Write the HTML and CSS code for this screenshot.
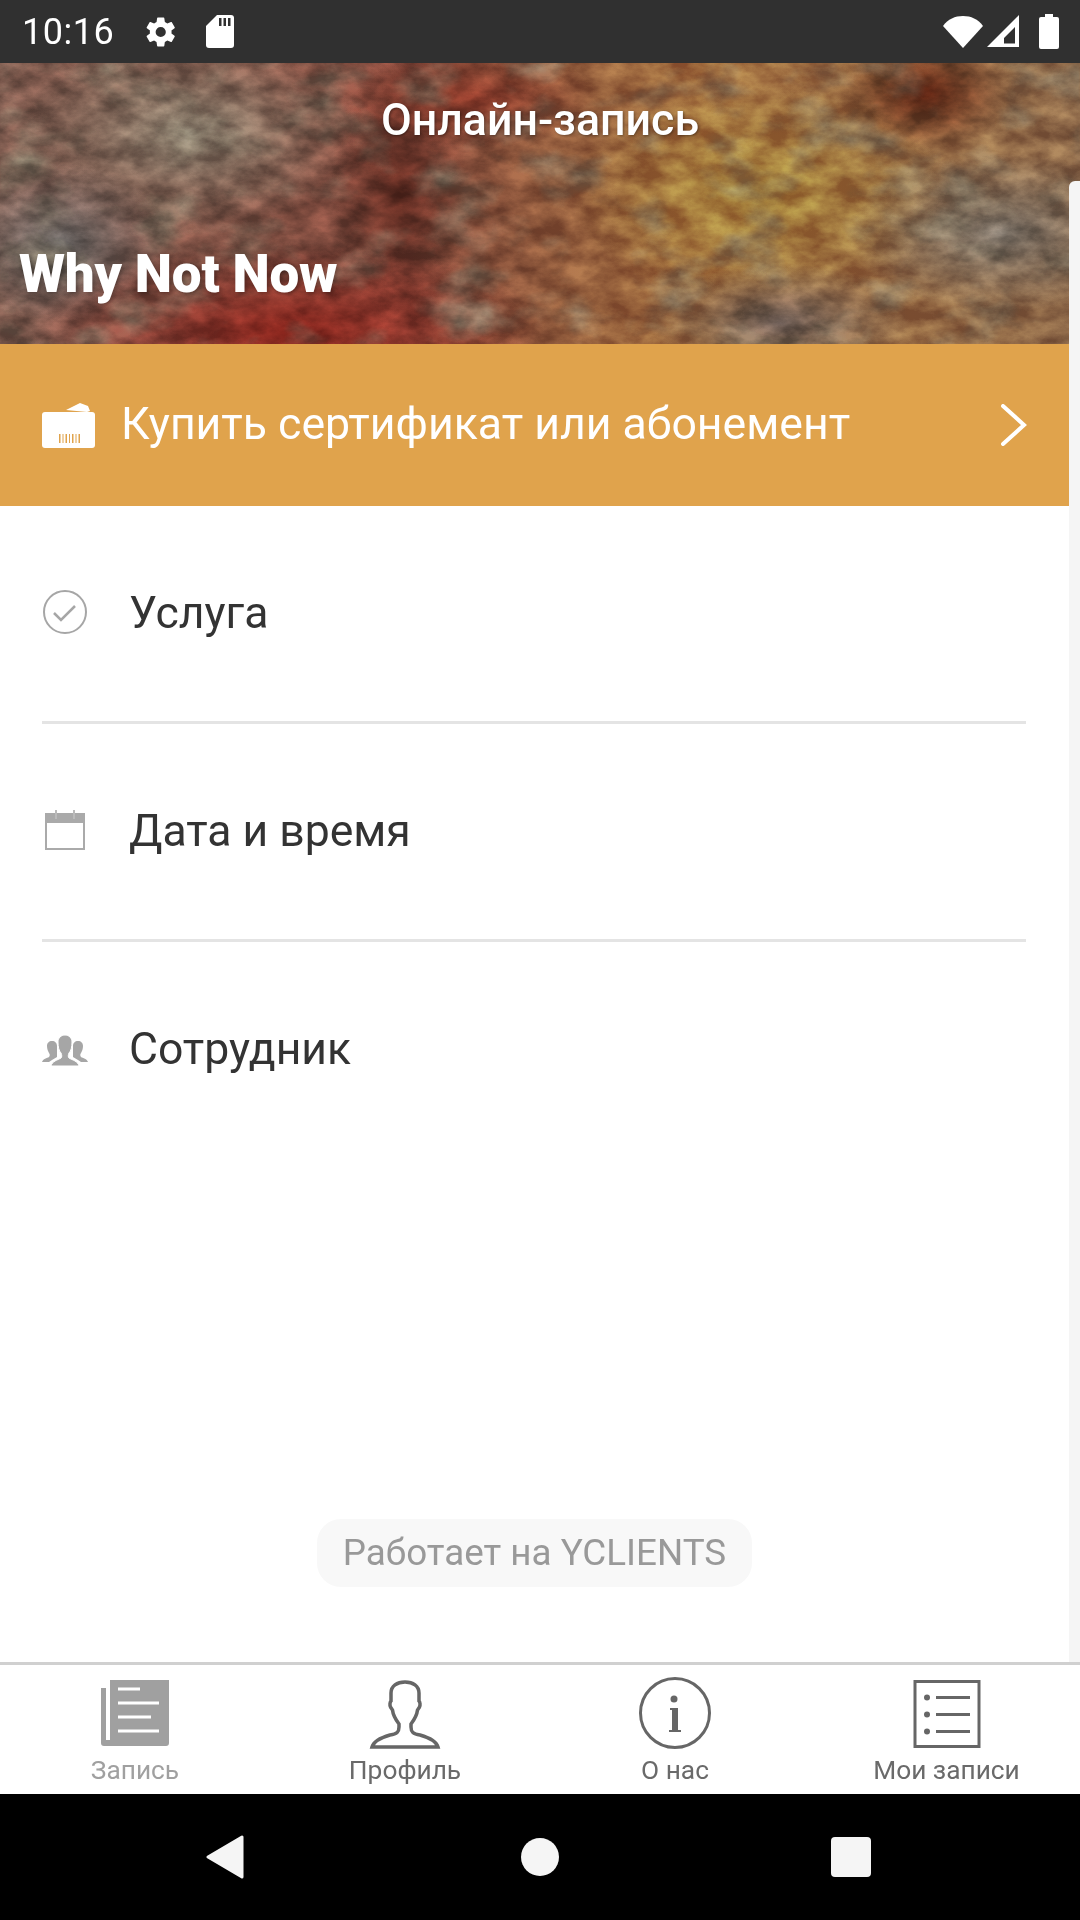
FILE: index.html
```html
<!DOCTYPE html>
<html lang="ru">
<head>
    <meta charset="UTF-8">
    <title>Онлайн-запись</title>
    <link rel="stylesheet" href="styles.css">
</head>
<body>
    <div class="app">
        <div class="status-bar">
            <span class="clock">10:16</span>
            <svg class="st-gear" width="34" height="34" viewBox="0 0 24 24" fill="#fff"><path d="M19.4 13c.04-.32.06-.66.06-1s-.02-.68-.07-1l2.16-1.68c.2-.15.25-.42.13-.64l-2.05-3.54c-.12-.22-.39-.3-.62-.22l-2.55 1.02c-.53-.4-1.1-.74-1.73-1l-.39-2.7A.5.5 0 0 0 13.85 1.8h-4.1a.5.5 0 0 0-.5.43l-.38 2.7c-.62.26-1.2.6-1.73 1L4.59 4.9c-.23-.09-.5 0-.62.22L1.92 8.66c-.13.22-.07.49.12.64L4.2 11c-.05.32-.08.67-.08 1s.02.68.07 1l-2.16 1.68c-.2.15-.25.42-.13.64l2.05 3.54c.12.22.39.3.62.22l2.55-1.02c.53.4 1.1.74 1.73 1l.39 2.7c.04.25.25.43.5.43h4.1c.25 0 .47-.18.5-.43l.38-2.7c.62-.26 1.2-.6 1.73-1l2.55 1.02c.23.09.5 0 .62-.22l2.05-3.54c.12-.22.07-.49-.13-.64zM11.8 15.6a3.6 3.6 0 1 1 0-7.2 3.6 3.6 0 0 1 0 7.2z"/></svg>
            <svg class="st-sd" width="28" height="33" viewBox="0 0 28 33"><path d="M11 0h14a3 3 0 0 1 3 3v27a3 3 0 0 1-3 3H3a3 3 0 0 1-3-3V11z" fill="#fff"/><path d="M13 3h2.5v8H13zM17.5 3H20v8h-2.500zM22 3h2.500v8H22z" fill="#303030"/></svg>
            <span class="st-space"></span>
            <svg width="40" height="33" viewBox="0 0 40 33" fill="#fff"><path d="M0 11C5 4 12 1 20 1s15 3 20 10L20 33z"/></svg>
            <svg class="st-signal" width="33" height="33" viewBox="0 0 33 33"><path d="M0 32 32 0v32zM17 28.500h11V12L17 23z" fill="#fff" fill-rule="evenodd"/></svg>
            <svg class="st-battery" width="20" height="35" viewBox="0 0 20 35" fill="#fff"><path d="M6 0h8v3h4a2 2 0 0 1 2 2v28a2 2 0 0 1-2 2H2a2 2 0 0 1-2-2V5a2 2 0 0 1 2-2h4z"/></svg>
        </div>

        <div class="header">
            <svg class="paint" width="1080" height="281">
                <defs>
                    <filter id="mottle" x="0" y="0" width="100%" height="100%" color-interpolation-filters="sRGB">
                        <feTurbulence type="fractalNoise" baseFrequency="0.03 0.05" numOctaves="6" seed="7"/>
                        <feColorMatrix type="matrix" values="1.8 0 0 0 -0.45  1.8 0 0 0 -0.45  1.8 0 0 0 -0.45  0 0 0 0 1"/>
                        <feGaussianBlur stdDeviation="0.7"/>
                    </filter>
                    <filter id="haze" x="0" y="0" width="100%" height="100%" color-interpolation-filters="sRGB">
                        <feTurbulence type="fractalNoise" baseFrequency="0.014 0.022" numOctaves="4" seed="4"/>
                        <feColorMatrix type="matrix" values="0 0 0 0 0.5  0 0 0 0 0.47  0 0 0 0 0.4  0 2 0 0 -1"/>
                        <feGaussianBlur stdDeviation="1"/>
                    </filter>
                </defs>
                <rect width="1080" height="281" filter="url(#haze)"/>
                <rect class="mottle" width="1080" height="281" filter="url(#mottle)"/>
            </svg>
            <div class="title">Онлайн-запись</div>
            <div class="company">Why Not Now</div>
        </div>

        <div class="buy">
            <svg width="53" height="45" viewBox="0 0 53 45">
                <path d="M24 7 38 0l8 3 2 5-3 1z" fill="#fff"/>
                <rect y="9" width="53" height="36" rx="3" fill="#fff"/>
                <path d="M17 31h1.500v9H17zM20.500 31h1v9h-1zM23.500 31h1.500v9h-1.500zM27 31h1v9h-1zM30 31h1.500v9H30zM33.500 31h1v9h-1zM36.500 31h1.500v9h-1.500z" fill="#e0a34c"/>
            </svg>
            <span class="buy-text">Купить сертификат или абонемент</span>
            <svg class="chevron" width="26" height="42" viewBox="0 0 26 42"><path d="M2 2l21 19L2 40" fill="none" stroke="#fff" stroke-width="4" stroke-linecap="round"/></svg>
        </div>

        <div class="rows">
            <div class="row line">
                <svg class="row-icon" width="46" height="46" viewBox="0 0 46 46"><circle cx="23" cy="23" r="21" fill="none" stroke="#a6a6a6" stroke-width="2"/><path d="M12 24l7 7 14-14" fill="none" stroke="#a6a6a6" stroke-width="2.500"/></svg>
                <span>Услуга</span>
            </div>
            <div class="row line">
                <svg class="row-icon" width="46" height="46" viewBox="0 0 46 46"><rect x="4" y="7" width="38" height="35" fill="none" stroke="#aaa" stroke-width="2"/><rect x="4" y="7" width="38" height="9" fill="#aaa"/><path d="M14 3v9M32 3v9" stroke="#bbb" stroke-width="2"/></svg>
                <span>Дата и время</span>
            </div>
            <div class="row">
                <svg class="row-icon" width="46" height="46" viewBox="0 0 46 46" fill="#a6a6a6">
                    <path d="M0 37c1-3 5-4 7-5 1-1 1-3 0-4-1-2-2-4-2-7 0-3 2-5 5-5s5 2 5 5v11l-5 3-3 2z"/>
                    <path d="M46 37c-1-3-5-4-7-5-1-1-1-3 0-4 1-2 2-4 2-7 0-3-2-5-5-5s-5 2-5 5v11l5 3 3 2z"/>
                    <path d="M9 41c1-5 7-6 10-8 1-1 1-3 0-5-2-2-3-6-3-11 0-4 3-7 7-7s7 3 7 7c0 5-1 9-3 11-1 2-1 4 0 5 3 2 9 3 10 8z" stroke="#fff" stroke-width="1"/>
                </svg>
                <span>Сотрудник</span>
            </div>
        </div>

        <div class="powered"><span class="powered-pill">Работает на YCLIENTS</span></div>

        <div class="tabs">
            <div class="tab active">
                <svg width="70" height="70" viewBox="0 2 70 70" fill="#a0a0a0">
                    <path d="M10 2h59v63a3 3 0 0 1-3 3H4a3 3 0 0 1-3-3V10h5v52h4z"/>
                    <path d="M18 11h22M18 25h41M18 39h33M18 53h41" stroke="#fff" stroke-width="3"/>
                </svg>
                <span>Запись</span>
            </div>
            <div class="tab">
                <svg width="72" height="70" viewBox="0 0 72 70"><path d="M3 67C5 60 14 57 21 55 28 54 30 52 30 47V44C27 40 24 35 23.500 30L21.500 27C20.500 25 21 22 22 21V13C22 6 28 2 36 2S50 6 50 13V21C51 22 51.500 25 50.500 27L48.500 30C48 35 45 40 42 44V47C42 52 44 54 51 55 58 57 67 60 69 67Z" fill="none" stroke="#666" stroke-width="3.500"/></svg>
                <span>Профиль</span>
            </div>
            <div class="tab">
                <svg class="info-icon" width="72" height="72" viewBox="0 0 72 72">
                    <circle cx="36" cy="36" r="34.500" fill="none" stroke="#666" stroke-width="3"/>
                    <circle cx="35" cy="22" r="3.500" fill="#666"/>
                    <path d="M31 31h8v22h3v2H30v-2h3V33h-2z" fill="#666"/>
                </svg>
                <span>О нас</span>
            </div>
            <div class="tab list-tab">
                <svg width="68" height="70" viewBox="0 1.500 68 70">
                    <rect x="2" y="3" width="64" height="65" fill="none" stroke="#666" stroke-width="3"/>
                    <circle cx="14" cy="19" r="3" fill="#666"/><circle cx="14" cy="36" r="3" fill="#666"/><circle cx="14" cy="53" r="3" fill="#666"/>
                    <path d="M23 19h34M23 36h34M23 53h34" stroke="#666" stroke-width="3"/>
                </svg>
                <span>Мои записи</span>
            </div>
        </div>

        <div class="nav-bar">
            <svg width="40" height="44" viewBox="0 0 40 44"><path d="M3 22 37 2v40z" fill="#f5f5f5" stroke="#f5f5f5" stroke-width="3" stroke-linejoin="round"/></svg>
            <span class="nav-circle"></span>
            <span class="nav-square"></span>
        </div>

        <div class="rail"></div>
    </div>
</body>
</html>
```

FILE: styles.css
```css
* {
    box-sizing: border-box;
}
body {
    margin: 0;
    font-family: Roboto, "Liberation Sans", sans-serif;
    background-color: white;
}
.app {
    position: relative;
    display: flex;
    flex-direction: column;
    width: 1080px;
    height: 1920px;
    overflow: hidden;
}
.status-bar {
    display: flex;
    align-items: center;
    height: 63px;
    padding: 0 21px 0 22px;
    background-color: #303030;
    color: white;
}
.clock {
    font-size: 36px;
    font-weight: 400;
    letter-spacing: 0.5px;
    width: 122px;
}
.st-sd {
    margin-left: 28px;
}
.st-space {
    flex: 1;
}
.st-signal {
    margin-left: 4px;
}
.st-battery {
    margin-left: 19px;
}
.header {
    position: relative;
    display: flex;
    flex-direction: column;
    height: 281px;
    padding: 29px 19px 0;
    color: white;
    background-color: #84594a;
    background-image:
        radial-gradient(ellipse 90px 60px at 925px 30px, #5f2413 0%, rgba(95,36,19,0) 100%),
        radial-gradient(ellipse 130px 50px at 470px 35px, #8c3a2a 0%, rgba(140,58,42,0) 100%),
        radial-gradient(ellipse 260px 90px at 290px 270px, #93281f 0%, rgba(147,40,31,0) 100%),
        radial-gradient(ellipse 70px 130px at 400px 130px, #5e2a20 0%, rgba(94,42,32,0) 100%),
        radial-gradient(ellipse 110px 80px at 60px 180px, #6e6a68 0%, rgba(110,106,104,0) 100%),
        radial-gradient(ellipse 170px 100px at 190px 70px, #8a7f6e 0%, rgba(138,127,110,0) 100%),
        radial-gradient(ellipse 150px 80px at 1000px 170px, #7b7268 0%, rgba(123,114,104,0) 100%),
        radial-gradient(ellipse 130px 60px at 780px 260px, #6f5f58 0%, rgba(111,95,88,0) 100%),
        radial-gradient(ellipse 190px 110px at 760px 130px, #a8843c 0%, rgba(168,132,60,0) 100%),
        linear-gradient(90deg, #7d5a4e 0%, #80473a 38%, #a4703f 65%, #8f6a4a 100%);
}
.paint {
    position: absolute;
    top: 0;
    left: 0;
}
.mottle {
    mix-blend-mode: overlay;
    opacity: 0.3;
}
.title {
    position: relative;
    align-self: center;
    font-size: 44.7px;
    font-weight: 500;
    line-height: 56px;
    text-shadow: 1px 1px 3px rgba(0, 0, 0, 0.4);
}
.company {
    position: relative;
    margin-top: 95px;
    font-size: 53px;
    font-weight: 900;
    line-height: 62px;
    letter-spacing: -0.2px;
    text-shadow: 2px 2px 4px rgba(0, 0, 0, 0.3);
}
.buy {
    display: flex;
    align-items: center;
    height: 162px;
    padding: 0 53px 0 42px;
    background-color: #e0a34c;
    color: white;
}
.buy-text {
    flex: 1;
    margin-left: 26px;
    margin-bottom: 2px;
    font-size: 44.6px;
}
.rows {
    display: flex;
    flex-direction: column;
    padding: 0 54px 0 42px;
}
.row {
    display: flex;
    align-items: flex-start;
    height: 218px;
    padding-top: 82px;
    font-size: 44.5px;
    line-height: 50px;
    color: #333;
}
.row svg {
    margin-top: 1px;
}
.row span {
    margin-left: 41px;
}
.line {
    border-bottom: 3px solid #e4e4e4;
}
.row-icon {
    flex-shrink: 0;
}
.powered {
    display: flex;
    justify-content: center;
    flex: 1;
    align-items: flex-end;
    padding-bottom: 75px;
    padding-right: 11px;
}
.powered-pill {
    padding: 0 26px;
    height: 68px;
    line-height: 68px;
    font-size: 36.8px;
    color: #999;
    background-color: #f8f8f8;
    border-radius: 24px;
}
.tabs {
    display: grid;
    grid-template-columns: repeat(4, 1fr);
    height: 132px;
    border-top: 3px solid #d0d0d0;
    background-color: white;
}
.tab {
    display: flex;
    flex-direction: column;
    align-items: center;
    padding-top: 15px;
    font-size: 26.3px;
    line-height: 30px;
    color: #6a6a6a;
}
.tab span {
    margin-top: 5px;
}
.info-icon {
    margin: -3px 0 1px;
}
.list-tab {
    padding-left: 3px;
}
.active {
    color: #a0a0a0;
}
.nav-bar {
    display: flex;
    align-items: center;
    height: 126px;
    background-color: black;
    padding-left: 205px;
}
.nav-circle {
    width: 38px;
    height: 38px;
    margin-left: 276px;
    border-radius: 50%;
    background-color: #f5f5f5;
}
.nav-square {
    width: 40px;
    height: 40px;
    margin-left: 272px;
    border-radius: 4px;
    background-color: #f5f5f5;
}
.rail {
    position: absolute;
    top: 181px;
    right: 0;
    width: 11px;
    height: 1481px;
    background-color: #f5f5f5;
    border-top-left-radius: 6px;
}
```
